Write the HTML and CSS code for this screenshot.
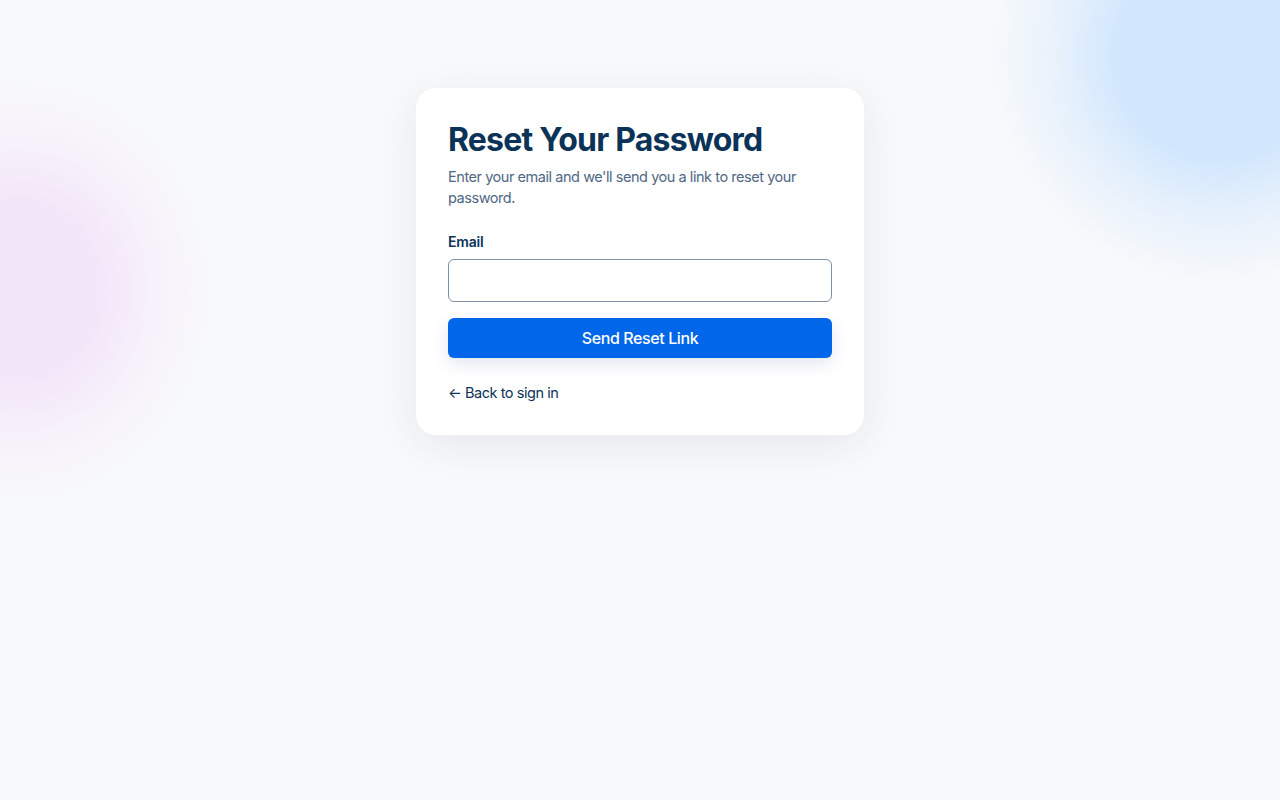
FILE: index.html
```html
<!DOCTYPE html>
<html lang="en">
<head>
<meta charset="utf-8">
<title>Reset Your Password</title>
<link rel="stylesheet" href="styles.css">
</head>
<body>
<main class="page">
  <section class="card">
    <h1 class="title">Reset Your Password</h1>
    <p class="subtitle">Enter your email and we'll send you a link to reset your password.</p>
    <form class="form">
      <label class="label" for="email">Email</label>
      <input class="input" id="email" type="email">
      <button class="btn" type="button">Send Reset Link</button>
    </form>
    <a class="back" href="#">&larr; Back to sign in</a>
  </section>
</main>
</body>
</html>
```
FILE: styles.css
```css
html, body {
  margin: 0;
  padding: 0;
  height: 100%;
}
body {
  font-family: "Inter", "Noto Sans", sans-serif;
  background:
    radial-gradient(ellipse 230px 230px at 1220px 55px, #d2e7fd 0%, #d2e7fd 45%, rgba(210, 231, 253, 0.45) 70%, rgba(248, 249, 251, 0) 100%),
    radial-gradient(ellipse 190px 210px at 20px 290px, #f4e6f9 0%, #f4e6f9 42%, rgba(244, 230, 249, 0.45) 68%, rgba(248, 249, 251, 0) 100%),
    #f8f9fb;
}
.page {
  display: flex;
  justify-content: center;
  padding-top: 88px;
}
.card {
  width: 384px;
  padding: 32px;
  background: #ffffff;
  border-radius: 20px;
  box-shadow: 0 10px 40px rgba(20, 40, 70, 0.08);
}
.title {
  margin: 0;
  font-size: 32px;
  line-height: 40px;
  font-weight: 700;
  letter-spacing: -0.8px;
  color: #0b3357;
}
.subtitle {
  margin: 6px 0 0;
  font-size: 14.5px;
  line-height: 21px;
  color: #4f6784;
  letter-spacing: -0.45px;
}
.form {
  display: flex;
  flex-direction: column;
  margin-top: 24px;
}
.label {
  font-size: 14px;
  line-height: 20px;
  font-weight: 600;
  color: #0b3357;
  margin-bottom: 7px;
  letter-spacing: -0.2px;
}
.input {
  box-sizing: border-box;
  height: 43px;
  width: 100%;
  border: 1px solid #7f93a6;
  border-radius: 6px;
  background: #fff;
  font: inherit;
}
.btn {
  margin-top: 16px;
  height: 40px;
  border: 0;
  border-radius: 6px;
  background: #0066ea;
  color: #fff;
  font-family: inherit;
  font-size: 16px;
  font-weight: 500;
  letter-spacing: -0.4px;
  box-shadow: 0 6px 16px rgba(0, 60, 140, 0.12);
}
.back {
  display: inline-block;
  margin-top: 25px;
  font-size: 14.5px;
  line-height: 20px;
  color: #0b3357;
  text-decoration: none;
  letter-spacing: -0.45px;
}
```
